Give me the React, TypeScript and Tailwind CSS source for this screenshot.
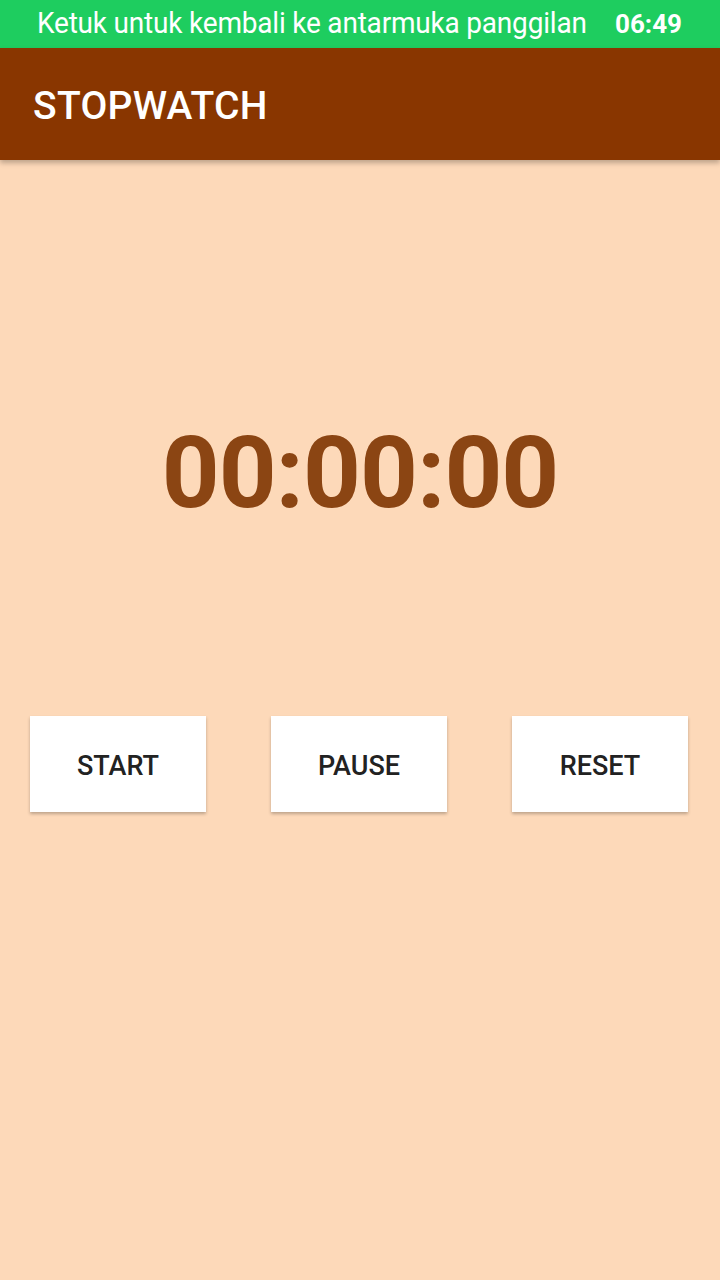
export default function App() {
  const buttons = ["START", "PAUSE", "RESET"]

  return (
    <div className="w-[720px] h-[1280px] bg-[#fdd9b9] flex flex-col overflow-hidden" style={{ fontFamily: "Roboto, 'Liberation Sans', sans-serif" }}>

      <div className="h-[48px] bg-[#1ecd5f] flex items-center pl-[37px] pr-[38px] text-white">
        <span className="text-[28px] leading-none tracking-[-0.2px] scale-y-105">
          Ketuk untuk kembali ke antarmuka panggilan
        </span>
        <span className="ml-auto text-[26px] font-bold leading-none">06:49</span>
      </div>

      <div className="h-[112px] bg-[#893600] flex items-center pl-[33px] pt-[4px] shadow-[0_3px_5px_rgba(0,0,0,0.25)] z-10">
        <h1 className="text-white text-[39px] font-medium tracking-[0.3px]">STOPWATCH</h1>
      </div>

      <div className="flex justify-center pt-[262px]">
        <p className="text-[#8b4513] text-[101px] font-bold leading-none tracking-[-1px]">00:00:00</p>
      </div>

      <div className="flex justify-between pl-[30px] pr-[32px] mt-[193px]">
        {buttons.map((b) => (
          <button
            key={b}
            className="w-[176px] h-[96px] bg-white text-[#222222] text-[27px] font-medium pt-[4px] shadow-[0_2px_3px_rgba(0,0,0,0.25)]"
          >
            {b}
          </button>
        ))}
      </div>

    </div>
  )
}
